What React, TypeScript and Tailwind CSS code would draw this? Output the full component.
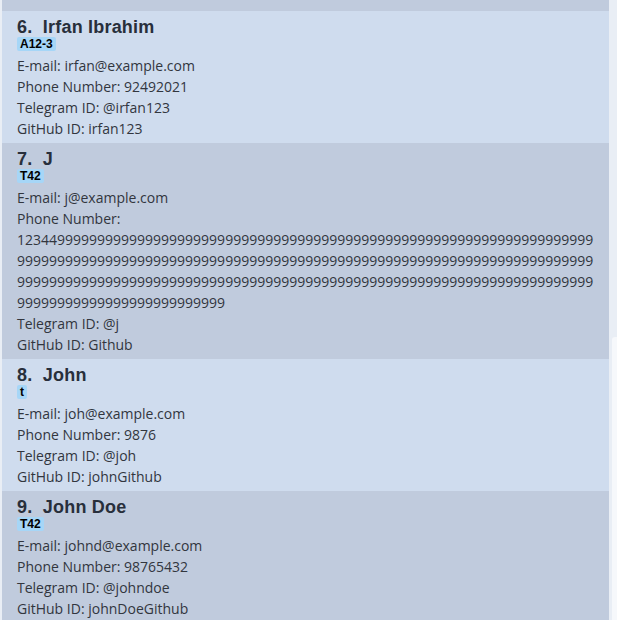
import React from "react";

type Person = {
  idx: number;
  name: string;
  tag: string;
  email: string;
  phone: string;
  telegram: string;
  github: string;
};

const people: Person[] = [
  { idx: 6, name: "Irfan Ibrahim", tag: "A12-3", email: "irfan@example.com", phone: "92492021", telegram: "@irfan123", github: "irfan123" },
  { idx: 7, name: "J", tag: "T42", email: "j@example.com", phone: "12344" + "9".repeat(237), telegram: "@j", github: "Github" },
  { idx: 8, name: "John", tag: "t", email: "joh@example.com", phone: "9876", telegram: "@joh", github: "johnGithub" },
  { idx: 9, name: "John Doe", tag: "T42", email: "johnd@example.com", phone: "98765432", telegram: "@johndoe", github: "johnDoeGithub" },
];

function Card({ p, dark }: { p: Person; dark: boolean }) {
  const long = p.phone.length > 40;
  return (
    <div className={`pl-[15px] pr-[10px] pt-[7px] pb-[4px] ${dark ? "bg-[#c0cbdd]" : "bg-[#cfdcee]"}`}>
      <div className="font-['Liberation_Sans',Arial,sans-serif] font-bold text-[18px] leading-[19px] tracking-[0.2px] text-[#282f3b] whitespace-pre">
        {p.idx}.  {p.name}
      </div>
      <div className="h-[18px] flex items-start">
        <span className="flex items-center bg-[#a6d6f7] rounded-[2px] px-[3px] h-[14px] font-['Liberation_Sans',Arial,sans-serif] font-bold text-[12px] leading-[14px] text-black">
          {p.tag}
        </span>
      </div>
      <div className="font-['Open_Sans',sans-serif] text-[14px] leading-[21px] text-[#32363e]">
        <div>E-mail: {p.email}</div>
        {long ? (
          <>
            <div>Phone Number:</div>
            <div className="break-all">{p.phone}</div>
          </>
        ) : (
          <div>Phone Number: {p.phone}</div>
        )}
        <div>Telegram ID: {p.telegram}</div>
        <div>GitHub ID: {p.github}</div>
      </div>
    </div>
  );
}

export default function App() {
  return (
    <div className="w-[617px] h-[620px] overflow-hidden bg-[#e9eef5] flex">
      <div className="flex-1 pl-[2px] -mt-[25px]">
        <div className="bg-[#c0cbdd] h-[25px] pl-[15px] font-['Open_Sans',sans-serif] text-[14px] leading-[21px] text-[#32363e]">
          GitHub ID: LeeGithub
        </div>
        <div className="bg-[#c0cbdd] h-[11px]" />
        {people.map((p, i) => (
          <Card key={p.idx} p={p} dark={i % 2 === 1} />
        ))}
      </div>
      <div className="w-[8px] flex flex-col">
        <div className="h-[337px]" />
        <div className="flex-1 ml-[3px] bg-[#f6f8fb] rounded-tl-[3px]" />
      </div>
    </div>
  );
}
